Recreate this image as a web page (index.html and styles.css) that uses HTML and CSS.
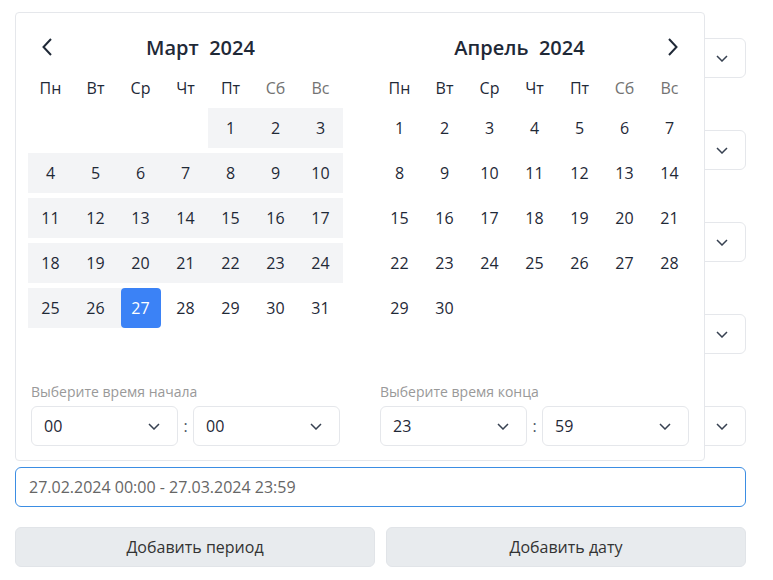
FILE: index.html
```html
<!DOCTYPE html>
<html lang="ru">
<head>
    <meta charset="UTF-8">
    <meta name="viewport" content="width=device-width, initial-scale=1.0">
    <title>Период</title>
    <link rel="stylesheet" href="styles.css">
</head>
<body>
    <div class="page">
        <div class="fields">
            <div class="select"><span class="select-value"></span><svg class="caret" viewBox="0 0 12 7"><path d="M1 1l5 5 5-5"/></svg></div>
            <div class="select"><span class="select-value"></span><svg class="caret" viewBox="0 0 12 7"><path d="M1 1l5 5 5-5"/></svg></div>
            <div class="select"><span class="select-value"></span><svg class="caret" viewBox="0 0 12 7"><path d="M1 1l5 5 5-5"/></svg></div>
            <div class="select"><span class="select-value"></span><svg class="caret" viewBox="0 0 12 7"><path d="M1 1l5 5 5-5"/></svg></div>
            <div class="select"><span class="select-value"></span><svg class="caret" viewBox="0 0 12 7"><path d="M1 1l5 5 5-5"/></svg></div>
        </div>

        <div class="range-field">
            <div class="picker">
                <div class="months">
                    <div class="month">
                        <div class="month-head">
                            <button class="nav nav-prev" type="button">
                                <svg viewBox="0 0 10 18"><path d="M9 1L1.5 9 9 17"/></svg>
                            </button>
                            <div class="month-title">Март&nbsp; 2024</div>
                        </div>
                        <div class="weekdays">
                            <span>Пн</span><span>Вт</span><span>Ср</span><span>Чт</span><span>Пт</span>
                            <span class="weekend">Сб</span><span class="weekend">Вс</span>
                        </div>
                        <div class="days">
                            <span></span><span></span><span></span><span></span>
                            <span class="in-range">1</span><span class="in-range">2</span><span class="in-range">3</span>
                            <span class="in-range">4</span><span class="in-range">5</span><span class="in-range">6</span><span class="in-range">7</span><span class="in-range">8</span><span class="in-range">9</span><span class="in-range">10</span>
                            <span class="in-range">11</span><span class="in-range">12</span><span class="in-range">13</span><span class="in-range">14</span><span class="in-range">15</span><span class="in-range">16</span><span class="in-range">17</span>
                            <span class="in-range">18</span><span class="in-range">19</span><span class="in-range">20</span><span class="in-range">21</span><span class="in-range">22</span><span class="in-range">23</span><span class="in-range">24</span>
                            <span class="in-range">25</span><span class="in-range">26</span><span class="range-end"><b>27</b></span><span>28</span><span>29</span><span>30</span><span>31</span>
                        </div>
                        <div class="time">
                            <div class="time-label">Выберите время начала</div>
                            <div class="time-row">
                                <div class="select"><span class="select-value">00</span><svg class="caret" viewBox="0 0 12 7"><path d="M1 1l5 5 5-5"/></svg></div>
                                <span class="colon">:</span>
                                <div class="select"><span class="select-value">00</span><svg class="caret" viewBox="0 0 12 7"><path d="M1 1l5 5 5-5"/></svg></div>
                            </div>
                        </div>
                    </div>

                    <div class="month">
                        <div class="month-head">
                            <div class="month-title">Апрель&nbsp; 2024</div>
                            <button class="nav nav-next" type="button">
                                <svg viewBox="0 0 10 18"><path d="M1 1l7.5 8L1 17"/></svg>
                            </button>
                        </div>
                        <div class="weekdays">
                            <span>Пн</span><span>Вт</span><span>Ср</span><span>Чт</span><span>Пт</span>
                            <span class="weekend">Сб</span><span class="weekend">Вс</span>
                        </div>
                        <div class="days">
                            <span>1</span><span>2</span><span>3</span><span>4</span><span>5</span><span>6</span><span>7</span>
                            <span>8</span><span>9</span><span>10</span><span>11</span><span>12</span><span>13</span><span>14</span>
                            <span>15</span><span>16</span><span>17</span><span>18</span><span>19</span><span>20</span><span>21</span>
                            <span>22</span><span>23</span><span>24</span><span>25</span><span>26</span><span>27</span><span>28</span>
                            <span>29</span><span>30</span>
                        </div>
                        <div class="time">
                            <div class="time-label">Выберите время конца</div>
                            <div class="time-row">
                                <div class="select"><span class="select-value">23</span><svg class="caret" viewBox="0 0 12 7"><path d="M1 1l5 5 5-5"/></svg></div>
                                <span class="colon">:</span>
                                <div class="select"><span class="select-value">59</span><svg class="caret" viewBox="0 0 12 7"><path d="M1 1l5 5 5-5"/></svg></div>
                            </div>
                        </div>
                    </div>
                </div>
            </div>

            <input class="range-input" type="text" value="27.02.2024 00:00 - 27.03.2024 23:59" readonly>
        </div>

        <div class="actions">
            <button class="btn" type="button">Добавить период</button>
            <button class="btn" type="button">Добавить дату</button>
        </div>
    </div>
</body>
</html>
```

FILE: styles.css
```css
* {
    margin: 0;
    padding: 0;
    box-sizing: border-box;
}

body {
    font-family: 'Open Sans', 'Noto Sans', sans-serif;
    font-size: 16px;
    color: #1f2937;
    background: #fff;
}

.page {
    width: 773px;
    padding: 38px 27px 0 15px;
}

/* plain selects of the form */
.fields {
    display: flex;
    flex-direction: column;
    gap: 52px;
}

.select {
    display: flex;
    align-items: center;
    justify-content: space-between;
    height: 40px;
    padding: 0 17px 0 12px;
    border: 1px solid #e5e7eb;
    border-radius: 6px;
    background: #fff;
}

.select-value {
    font-size: 16px;
    color: #1f2937;
}

.caret {
    width: 12px;
    height: 7px;
    fill: none;
    stroke: #374151;
    stroke-width: 1.5;
}

/* date range input + dropdown */
.range-field {
    position: relative;
    margin-top: 21px;
}

.range-input {
    display: block;
    width: 100%;
    height: 40px;
    padding: 0 13px;
    border: 1px solid #3b8de3;
    border-radius: 6px;
    font-family: 'Open Sans', 'Noto Sans', sans-serif;
    font-size: 16px;
    color: #666;
    outline: none;
}

.picker {
    position: absolute;
    left: 0;
    bottom: calc(100% + 6px);
    z-index: 10;
    width: 690px;
    padding: 12px 12px 14px;
    background: #fff;
    border: 1px solid #e5e7eb;
    border-radius: 4px;
}

.months {
    display: flex;
    gap: 34px;
}

.month {
    width: 315px;
}

.month-head {
    display: flex;
    align-items: center;
    height: 43px;
    padding-top: 1px;
}

.month-title {
    flex: 1;
    text-align: center;
    font-size: 20px;
    font-weight: 600;
    color: #1f2937;
}

.nav {
    display: flex;
    align-items: center;
    width: 30px;
    height: 30px;
    border: none;
    background: none;
    cursor: pointer;
}

.nav svg {
    width: 10px;
    height: 18px;
    fill: none;
    stroke: #1f2937;
    stroke-width: 2;
}

.nav-prev {
    justify-content: flex-end;
    padding-right: 6px;
}

.nav-next {
    justify-content: flex-start;
    padding-left: 6px;
}

.weekdays,
.days {
    display: grid;
    grid-template-columns: repeat(7, 45px);
}

.weekdays span {
    height: 40px;
    display: flex;
    align-items: center;
    justify-content: center;
    font-weight: 500;
}

.weekdays .weekend {
    color: #737373;
}

.days {
    grid-template-rows: repeat(6, 40px);
    row-gap: 5px;
}

.days span {
    display: flex;
    align-items: center;
    justify-content: center;
    color: #1f2937;
}

.days .in-range {
    background: #f3f4f6;
}

.days .range-end {
    background: linear-gradient(to right, #f3f4f6 50%, transparent 50%);
}

.range-end b {
    display: flex;
    align-items: center;
    justify-content: center;
    width: 40px;
    height: 40px;
    border-radius: 4px;
    background: #3b82f6;
    color: #fff;
    font-weight: 500;
}

/* time selects under each month */
.time {
    padding: 9px 3px 0;
}

.time-label {
    font-size: 14px;
    line-height: 20px;
    color: #999;
    margin-bottom: 4px;
}

.time-row {
    display: grid;
    grid-template-columns: 1fr 15px 1fr;
    align-items: center;
}

.colon {
    text-align: center;
    color: #4b5563;
}

/* bottom buttons */
.actions {
    display: grid;
    grid-template-columns: 1fr 1fr;
    gap: 11px;
    margin-top: 20px;
}

.btn {
    height: 40px;
    border: 1px solid #e1e4e8;
    border-radius: 6px;
    background: #e8ebee;
    font-family: 'Open Sans', 'Noto Sans', sans-serif;
    font-size: 16px;
    font-weight: 500;
    color: #333;
    cursor: pointer;
}
```
